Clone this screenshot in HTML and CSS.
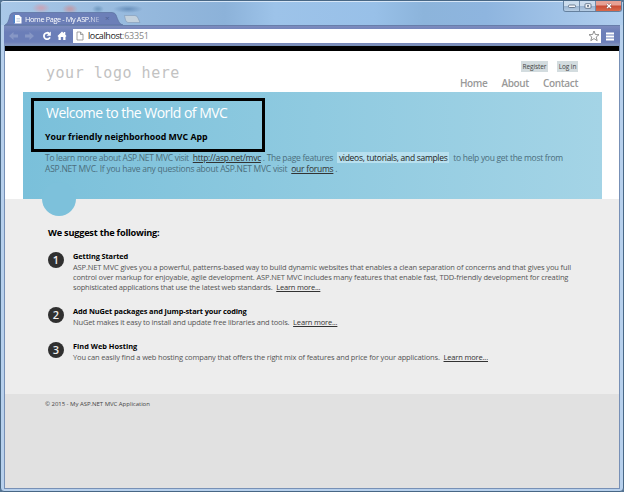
FILE: index.html
```html
<!DOCTYPE html>
<html lang="en">
<head>
<meta charset="utf-8">
<title>Home Page - My ASP.NET MVC Application</title>
<link rel="stylesheet" href="styles.css">
</head>
<body>
<div class="window">
  <div class="titlebar">
    <div class="tab">
      <svg class="tab-shape" viewBox="0 0 118 13" preserveAspectRatio="none"><path d="M0 13C3 12 4 7 5 3Q6 .5 9 .5H107Q110 .5 111 3C113 8 114 12 118 13Z" fill="#6c7fb8" stroke="#5a709d" stroke-width=".7"/></svg>
      <svg class="favicon" viewBox="0 0 9 10"><path d="M1 1H6L8.500 3.500V9.500H1Z" fill="#fff"/><path d="M.5 1V9.500H2V1Z" fill="#4b83cc"/><path d="M3.500 4.500H7M3.500 6H7M3.500 7.500H7" stroke="#b9c9de" stroke-width=".7"/></svg>
      <span class="tab-title">Home Page - My ASP.NE</span><span class="tab-close">×</span>
    </div>
    <svg class="new-tab" viewBox="0 0 18 8"><path d="M1.500 .5H12Q14 .5 15 3L17 7.500H5Q3.500 7.500 2.500 5Z" fill="#c3d1dd" stroke="#8198b6" stroke-width=".6"/></svg>
    <div class="controls">
      <span class="control"><svg viewBox="0 0 10 6"><rect x="1.500" y="2" width="7" height="2.500" rx="1" fill="#f5f7fa" stroke="#53647b" stroke-width=".8"/></svg></span>
      <span class="control"><svg viewBox="0 0 10 6"><rect x="2" y=".7" width="6" height="4.600" rx="1" fill="#f5f7fa" stroke="#53647b" stroke-width=".8"/><rect x="4" y="2.200" width="2" height="1.500" fill="#53647b"/></svg></span>
      <span class="control close"><svg viewBox="0 0 10 6"><path d="M3 1L7 5M7 1L3 5" stroke="#6b3b3b" stroke-width="2.400"/><path d="M3 1L7 5M7 1L3 5" stroke="#fff" stroke-width="1.500"/></svg></span>
    </div>
  </div>
  <div class="toolbar">
    <svg class="nav-icons" viewBox="0 0 64 16">
      <path d="M0 8L4.500 4V6.500H9V9.500H4.500V12ZM25 8L20.500 4V6.500H16V9.500H20.500V12Z" fill="#8797c5"/>
      <path d="M40.300 5.600A3.200 3.200 0 1 0 41 9.400" fill="none" stroke="#fff" stroke-width="1.800"/><path d="M41.800 3.500V7.700H37.600Z" fill="#fff"/>
      <path d="M48.500 8L53 3.600L54.800 5.300V4H56.300V6.800L57.500 8L56.500 9V12H54.200V9H51.800V12H49.500V9Z" fill="#fff"/>
    </svg>
    <div class="address">
      <svg class="page-icon" viewBox="0 0 8 10"><path d="M1 1H4.500L7 3.500V9H1ZM4.500 1V3.500H7" fill="#fff" stroke="#8b8b8b" stroke-width=".8"/></svg>
      <span class="url">localhost<span class="port">:63351</span></span>
      <svg class="star" viewBox="0 0 12 12"><path d="M6 1L7.400 4.500L11 4.700L8.200 7L9.200 10.700L6 8.600L2.800 10.700L3.800 7L1 4.700L4.600 4.500Z" fill="#fff" stroke="#777" stroke-width=".8"/></svg>
    </div>
    <svg class="menu" viewBox="0 0 8 9"><path d="M0 1.500H8M0 4.500H8M0 7.500H8" stroke="#fff" stroke-width="2"/></svg>
  </div>
  <div class="page">
    <header>
      <div class="logo">your logo here</div>
      <div class="header-links">
        <div class="account"><a class="register">Register</a><a class="login">Log in</a></div>
        <nav><a>Home</a><a>About</a><a>Contact</a></nav>
      </div>
    </header>
    <section class="banner">
      <div class="callout">
        <h1>Welcome to the World of MVC</h1>
        <h2>Your friendly neighborhood MVC App</h2>
      </div>
      <p>
        <span class="line l1">To learn more about ASP.NET MVC visit <a class="gap">http://asp.net/mvc</a> . The page features <mark>videos, tutorials, and samples</mark> to help you get the most from</span>
        <span class="line l2">ASP.NET MVC. If you have any questions about ASP.NET MVC visit <a class="gap">our forums</a> .</span>
      </p>
      <div class="notch"></div>
    </section>
    <main>
      <h3>We suggest the following:</h3>
      <ol>
        <li><span class="num">1</span><div class="item"><h4 class="t1">Getting Started</h4>
          <span class="line i1">ASP.NET MVC gives you a powerful, patterns-based way to build dynamic websites that enables a clean separation of concerns and that gives you full</span>
          <span class="line i2">control over markup for enjoyable, agile development. ASP.NET MVC includes many features that enable fast, TDD-friendly development for creating</span>
          <span class="line i3">sophisticated applications that use the latest web standards. <a class="gap">Learn more...</a></span></div></li>
        <li><span class="num">2</span><div class="item"><h4 class="t2">Add NuGet packages and jump-start your coding</h4>
          <span class="line i4">NuGet makes it easy to install and update free libraries and tools. <a class="gap">Learn more...</a></span></div></li>
        <li><span class="num">3</span><div class="item"><h4 class="t3">Find Web Hosting</h4>
          <span class="line i5">You can easily find a web hosting company that offers the right mix of features and price for your applications. <a class="gap">Learn more...</a></span></div></li>
      </ol>
    </main>
    <footer>© 2015 - My ASP.NET MVC Application</footer>
  </div>
</div>
</body>
</html>
```
FILE: styles.css
```css
* { box-sizing: border-box; }
html, body { margin: 0; width: 624px; height: 492px; overflow: hidden; }
body { font-family: "Open Sans", "Noto Sans", sans-serif; background: #557595; }
h1, h2, h3, h4, p, ol { margin: 0; padding: 0; }
.window {
  display: flex; flex-direction: column; width: 624px; height: 492px;
  padding: 0 4px 3px; border: 1px solid #486785; border-radius: 4px;
  background: #b7d0ec;
}
.titlebar {
  display: flex; align-items: flex-end; flex: 0 0 24px; margin: 0 -4px;
  padding-left: 4px; border-top: 1px solid #d6e6f7; border-radius: 3px 3px 0 0;
  background:
    radial-gradient(ellipse 9px 5px at 40px 6px, #c5a8bd 20%, transparent),
    radial-gradient(ellipse 8px 5px at 69px 7px, #bd9faf 20%, transparent),
    radial-gradient(ellipse 6px 4px at 97px 7px, #779fc5 20%, transparent),
    radial-gradient(ellipse 15px 4px at 127px 7px, #6d94bf 10%, transparent),
    linear-gradient(90deg, #a9c8e8, #9bbde0 15%, #8cb2d9 36%, #9dc3e9 44%, #98c0e8 60%, #8cb4db 68%, #8eb5df 78%, #b0ceee);
}
.tab { display: flex; align-items: center; position: relative; width: 118px; height: 13px; padding-left: 8px; }
.tab-shape { position: absolute; inset: 0; width: 118px; height: 13px; }
.favicon { position: relative; width: 9px; height: 10px; }
.tab-title { position: relative; margin-left: 3px; white-space: nowrap; font-size: 7.3px; line-height: 12px; letter-spacing: -.36px; color: #fff; -webkit-mask-image: linear-gradient(90deg, #000 84%, #0006); mask-image: linear-gradient(90deg, #000 84%, #0006); }
.tab-close { position: absolute; left: 100px; top: 1px; font-size: 8px; line-height: 10px; color: #4e6194; }
.new-tab { width: 18px; height: 8px; margin-bottom: 2px; }
.controls { display: flex; align-self: flex-start; margin: -1px 1px 0 auto; height: 11px; border: 1px solid #64809e; border-top: 0; border-radius: 0 0 3px 3px; overflow: hidden; }
.control { display: flex; justify-content: center; align-items: center; width: 16px; border-right: 1px solid #718ba9; background: linear-gradient(#cbdced 45%, #98b2ce 50%, #b6cde5); }
.control svg { width: 10px; height: 6px; }
.close { width: 25px; border: 0; background: linear-gradient(#e6a093 40%, #c84c35 50%, #d8694a); }
.toolbar { display: flex; align-items: center; flex: 0 0 21px; margin: 0 -1px; padding: 0 6px 0 5px; border-top: 1px solid #687eaa; background: linear-gradient(#7d8cbe, #6b7eb8 30%, #6b7eb8 80%, #8b98bd); }
.nav-icons { width: 64px; height: 16px; }
.address { display: flex; align-items: center; width: 528px; height: 14px; margin-top: -1px; padding: 0 1px 0 3px; background: #fff; }
.page-icon { width: 8px; height: 10px; }
.url { margin-left: 4px; font-size: 9px; line-height: 14px; letter-spacing: -.4px; color: #222; }
.port { color: #858585; letter-spacing: -.25px; }
.star { width: 12px; height: 12px; margin-left: auto; }
.menu { width: 8px; height: 9px; margin-left: auto; }
.page { display: flex; flex-direction: column; flex: 1; border-top: 5px solid #000; background: #fff; box-shadow: 0 0 0 1px #7790b6; }
header { display: flex; justify-content: space-between; height: 41px; padding: 0 41px 0 41px; }
.logo { padding-top: 12px; font: 15px/20px "DejaVu Sans Mono", monospace; letter-spacing: .53px; color: #c2c2c2; white-space: nowrap; }
.header-links { display: flex; flex-direction: column; align-items: flex-end; padding-top: 10px; }
.account { display: flex; gap: 9px; }
.account a { display: block; height: 11px; text-align: center; background: #d3dcdf; color: #444; font-size: 6.5px; line-height: 11px; letter-spacing: -.1px; }
.register { width: 27px; }
.login { width: 21px; }
nav { display: flex; gap: 14px; margin-top: 4px; font-size: 10px; line-height: 15px; font-weight: 600; letter-spacing: -.35px; color: #999; }
.banner { position: relative; z-index: 1; width: 579px; height: 107px; margin-left: 18px; padding: 6px 0 0 8px; background: linear-gradient(90deg, #7ac0da, #a4d4e6); }
.callout { width: 234px; height: 54px; padding: 3px 0 0 11px; border: 3px solid #000; }
h1 { padding-left: 1px; font-size: 14px; line-height: 18px; letter-spacing: -.52px; font-weight: 400; color: #fff; white-space: nowrap; }
h2 { margin-top: 9px; font-size: 8.8px; line-height: 12px; font-weight: 700; white-space: nowrap; }
.banner p { padding-left: 14px; }
.banner .line { height: 11px; line-height: 11px; font-size: 8.5px; color: #4c6e7c; }
.line { display: block; white-space: nowrap; }
.line a { text-decoration: underline; color: #333; }
.l1 { letter-spacing: -.295px; }
.l2 { letter-spacing: -.245px; }
.i1 { letter-spacing: -.14px; }
.i2 { letter-spacing: -.15px; }
.i3 { letter-spacing: -.19px; }
.i4 { letter-spacing: -.175px; }
.i5 { letter-spacing: -.16px; }
.t1 { letter-spacing: -.1px; }
.t2 { letter-spacing: -.11px; }
.gap { margin-left: 2px; }
mark { margin: 0 2px; padding: 0 2px; background: #b8e0ef; color: #222; }
.notch { position: absolute; left: 19px; top: 90px; width: 34px; height: 34px; border-radius: 50%; background: #7dc1db; }
main { height: 195px; padding: 27px 0 0 42px; background: #ededed; }
h3 { padding-left: 1px; font-size: 9.2px; line-height: 14px; letter-spacing: -.22px; white-space: nowrap; }
ol { list-style: none; margin-top: 11px; }
li { display: flex; margin-bottom: 14px; }
.num { flex: 0 0 16px; height: 16px; margin: 1px 9px 0 1px; border-radius: 50%; background: #303030; color: #eee; text-align: center; font-size: 11px; line-height: 16px; font-weight: 600; }
h4 { font-size: 7.4px; line-height: 11px; white-space: nowrap; }
.item .line { font-size: 7.5px; line-height: 10px; height: 10px; color: #555; }
footer { flex: 1; padding: 5px 0 0 40px; background: #e1e1e1; color: #444; font-size: 6px; line-height: 10px; letter-spacing: -.03px; }
```
